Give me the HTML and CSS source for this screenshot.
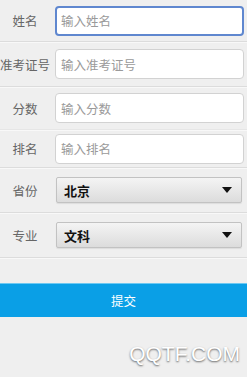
FILE: index.html
```html
<!DOCTYPE html>
<html lang="zh">
<head>
<meta charset="utf-8">
<link rel="stylesheet" href="styles.css">
</head>
<body>
<div class="form">
  <div class="row r1">
    <div class="label">姓名</div>
    <div class="field input focus"><span class="ph">输入姓名</span></div>
  </div>
  <div class="row r2">
    <div class="label">准考证号</div>
    <div class="field input"><span class="ph">输入准考证号</span></div>
  </div>
  <div class="row r3 noline">
    <div class="label">分数</div>
    <div class="field input"><span class="ph">输入分数</span></div>
  </div>
  <div class="row r4">
    <div class="label">排名</div>
    <div class="field input"><span class="ph">输入排名</span></div>
  </div>
  <div class="row r5">
    <div class="label">省份</div>
    <div class="field select"><span class="val">北京</span><span class="arrow"></span></div>
  </div>
  <div class="row r6">
    <div class="label">专业</div>
    <div class="field select"><span class="val">文科</span><span class="arrow"></span></div>
  </div>
  <div class="btnwrap">
    <div class="btn">提交</div>
  </div>
  <div class="mark">QQTF.COM</div>
</div>
</body>
</html>
```

FILE: styles.css
```css
html, body {
  margin: 0;
  padding: 0;
  background: #efefef;
  width: 247px;
  height: 377px;
  overflow: hidden;
  font-family: "Noto Sans CJK SC", "Liberation Sans", sans-serif;
}
.form {
  display: flex;
  flex-direction: column;
}
.row {
  display: flex;
  align-items: center;
  border-bottom: 1px solid #dcdcdc;
  box-shadow: 0 1px 0 #f8f8f8;
  box-sizing: border-box;
  padding-right: 3px;
}
.row.noline {
  border-bottom-color: #e6e6e6;
}
.r1 { height: 42px; }
.r2 { height: 45px; }
.r3 { height: 43px; }
.r4 { height: 38px; }
.r5 { height: 45px; }
.r6 { height: 45px; }
.label {
  width: 50px;
  flex: none;
  text-align: center;
  font-size: 12.5px;
  color: #666;
  white-space: nowrap;
  margin-right: 5px;
}
.field {
  flex: 1;
  box-sizing: border-box;
  display: flex;
  align-items: center;
}
.input {
  height: 30px;
  background: #fff;
  border: 1px solid #d2d2d2;
  border-radius: 4px;
  padding-left: 5px;
}
.input.focus {
  border: 2px solid #5f87cf;
  padding-left: 4px;
}
.ph {
  font-size: 12.5px;
  color: #9a9a9a;
}
.select {
  height: 26px;
  margin-left: 1px;
  margin-right: 2px;
  border: 1px solid #c2c2c2;
  border-radius: 2px;
  background: linear-gradient(#f4f4f4, #dcdcdc);
  padding: 0 9px 0 7px;
  justify-content: space-between;
  box-shadow: 0 1px 1px rgba(0,0,0,0.08);
}
.val {
  font-size: 13px;
  color: #111;
  font-weight: bold;
}
.arrow {
  width: 0;
  height: 0;
  border-left: 5px solid transparent;
  border-right: 5px solid transparent;
  border-top: 6px solid #111;
}
.btnwrap {
  padding-top: 25px;
}
.btn {
  height: 34px;
  background: #0a9fe6;
  border-top: 1px solid #6cc8f2;
  box-sizing: border-box;
  display: flex;
  align-items: center;
  justify-content: center;
  color: #fff;
  font-size: 12.5px;
}
.mark {
  align-self: flex-end;
  margin-top: 25px;
  margin-right: 7px;
  font-family: "Liberation Sans", sans-serif;
  font-size: 21px;
  color: #fff;
  text-shadow: 0 1px 2px rgba(0,0,0,0.6);
}
```
